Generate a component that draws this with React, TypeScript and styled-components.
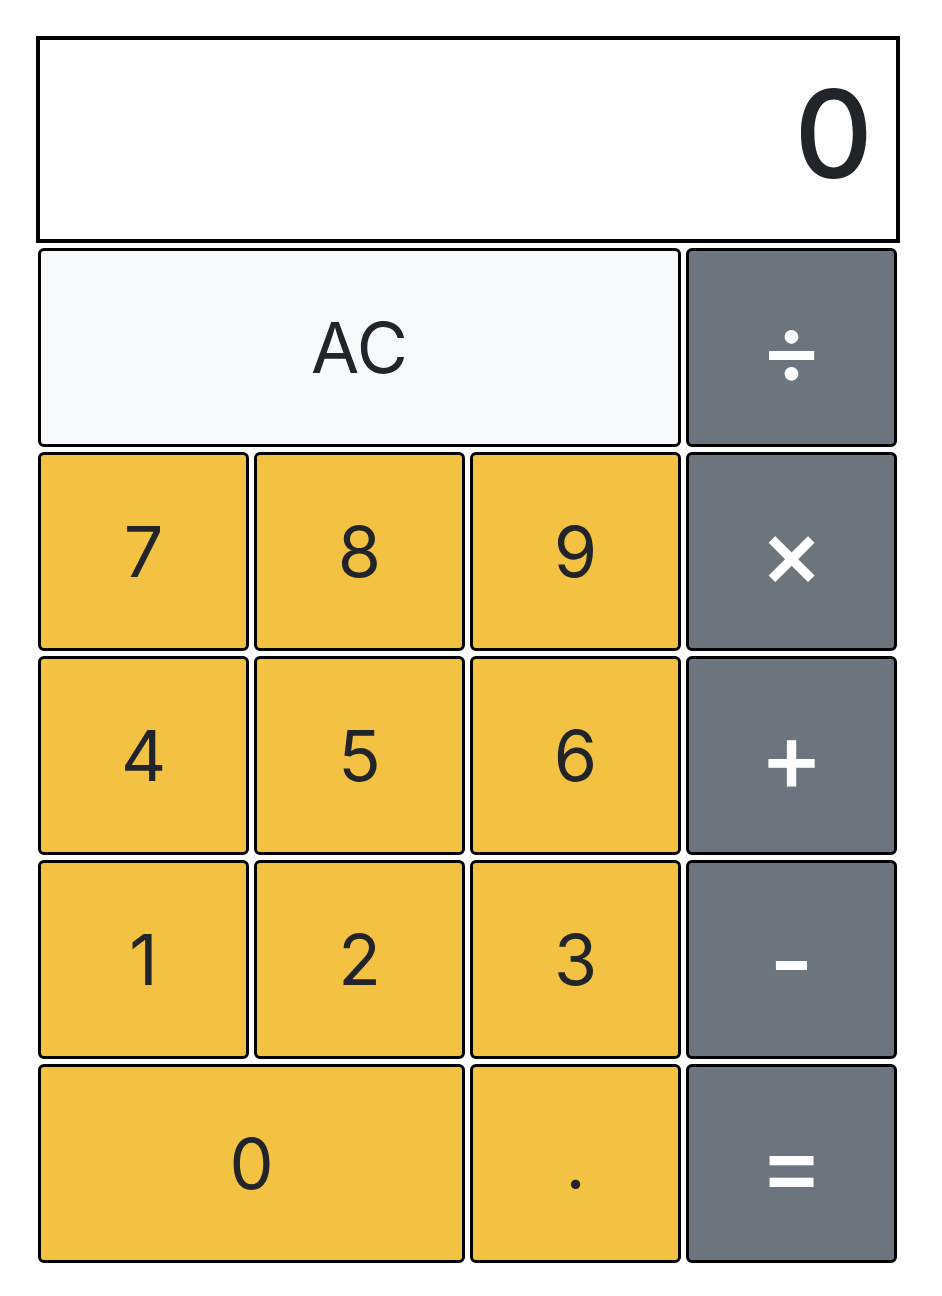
import React from 'react'
import styled, { createGlobalStyle } from 'styled-components'

const GlobalStyle = createGlobalStyle`
  html, body {
    margin: 0;
    padding: 0;
    background: #ffffff;
  }

  body {
    font-family: Inter, 'Liberation Sans', sans-serif;
    color: #212529;
  }
`

type Variant = 'light' | 'warning' | 'secondary'

type Key = {
  label: string
  variant: Variant
  span?: number
}

const keys: Array<Key> = [
  { label: 'AC', variant: 'light', span: 3 },
  { label: '÷', variant: 'secondary' },
  { label: '7', variant: 'warning' },
  { label: '8', variant: 'warning' },
  { label: '9', variant: 'warning' },
  { label: '×', variant: 'secondary' },
  { label: '4', variant: 'warning' },
  { label: '5', variant: 'warning' },
  { label: '6', variant: 'warning' },
  { label: '+', variant: 'secondary' },
  { label: '1', variant: 'warning' },
  { label: '2', variant: 'warning' },
  { label: '3', variant: 'warning' },
  { label: '-', variant: 'secondary' },
  { label: '0', variant: 'warning', span: 2 },
  { label: '.', variant: 'warning' },
  { label: '=', variant: 'secondary' }
]

const colors: Record<Variant, { bg: string, fg: string }> = {
  light: { bg: '#f8f9fa', fg: '#212529' },
  warning: { bg: '#f4c243', fg: '#212529' },
  secondary: { bg: '#6c757d', fg: '#ffffff' }
}

const Page = styled.div`
  padding: 36px;
`

const Calculator = styled.div`
  width: 864px;
`

const Display = styled.div`
  box-sizing: border-box;
  height: 207px;
  border: 4px solid #000000;
  padding: 0 23px 12px 0;
  display: flex;
  align-items: center;
  justify-content: flex-end;
  font-size: 122px;
  font-weight: 500;
  line-height: 1;
  color: #212529;
`

const Keypad = styled.div`
  margin-top: 5px;
  padding: 0 3px 0 2px;
  display: grid;
  grid-template-columns: repeat(4, 1fr);
  grid-auto-rows: 199px;
  gap: 5px;
`

const KeyButton = styled.button<{ $variant: Variant, $span: number }>`
  grid-column: span ${({ $span }) => $span};
  box-sizing: border-box;
  margin: 0;
  padding: 0;
  border: 3px solid #000000;
  border-radius: 6px;
  background: ${({ $variant }) => colors[$variant].bg};
  color: ${({ $variant }) => colors[$variant].fg};
  font-family: Inter, 'Liberation Sans', sans-serif;
  font-size: ${({ $variant }) => ($variant === 'secondary' ? '96px' : '70px')};
  font-weight: ${({ $variant }) => ($variant === 'secondary' ? 500 : 400)};
  line-height: 1;
  display: flex;
  align-items: center;
  justify-content: center;
  cursor: pointer;
`

export default function App (): JSX.Element {
  return (
    <>
      <GlobalStyle />
      <Page>
        <Calculator>
          <Display>0</Display>
          <Keypad>
            {keys.map(({ label, variant, span }, index) => (
              <KeyButton key={`key-${index}`} $variant={variant} $span={span ?? 1}>
                {label}
              </KeyButton>
            ))}
          </Keypad>
        </Calculator>
      </Page>
    </>
  )
}
